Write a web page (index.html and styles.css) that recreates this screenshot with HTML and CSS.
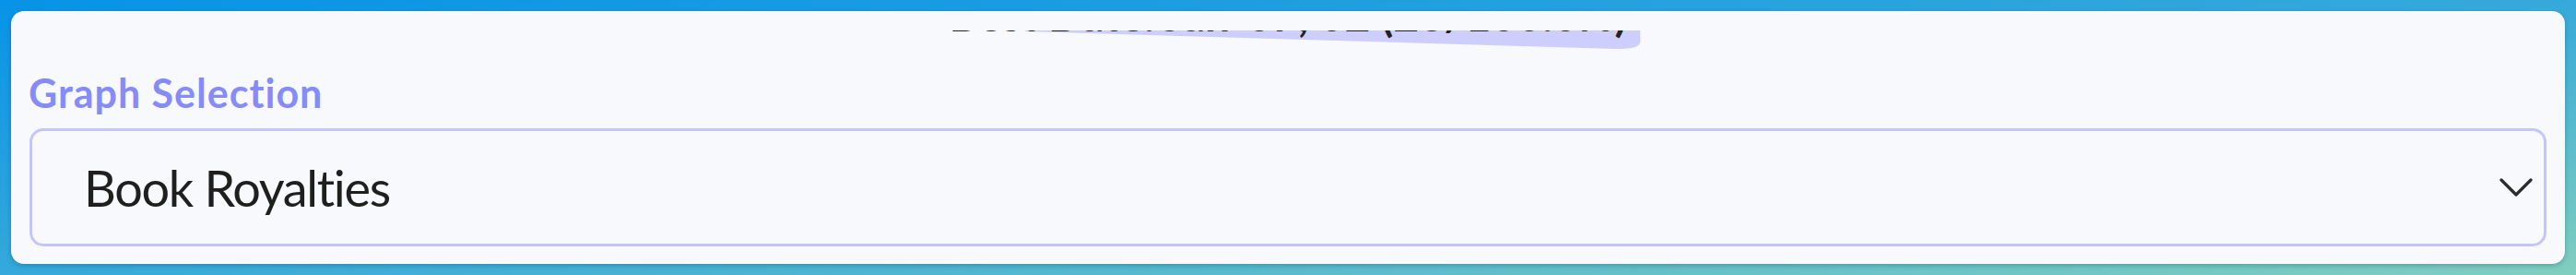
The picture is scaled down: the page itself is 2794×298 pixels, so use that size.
FILE: index.html
```html
<!DOCTYPE html>
<html lang="en">
<head>
<meta charset="utf-8">
<title>Graph Selection</title>
<link rel="stylesheet" href="styles.css">
</head>
<body>
  <main class="card">
    <div class="scroller">
      <div class="caption">
        <span class="caption-text">Best Date: Jan-07, 02 (28/100.0%)<svg class="swoosh" width="667" height="41" viewBox="0 0 667 41" aria-hidden="true"><path d="M0,0 L667,0 L667,31 C667,38 660,40 640,40 L0,21 Z" fill="#cdcefc"/></svg></span>
      </div>
      <div class="label">Graph Selection</div>
      <div class="select">
        <span class="select-value">Book Royalties</span>
        <svg class="chevron" width="36" height="22" viewBox="0 0 36 22" aria-hidden="true"><polyline points="2,3 18,19 34,3" fill="none" stroke="#2b2b2b" stroke-width="3.2" stroke-linecap="round" stroke-linejoin="round"/></svg>
      </div>
    </div>
  </main>
</body>
</html>
```

FILE: styles.css
```css
html, body {
  margin: 0;
  padding: 0;
}

body {
  width: 2794px;
  height: 298px;
  box-sizing: border-box;
  padding: 12px;
  background: linear-gradient(to bottom right, #0793e7 0%, #35a9da 50%, #80cebf 100%);
  font-family: "Lato", "Open Sans", sans-serif;
  font-variant-ligatures: none;
  overflow: hidden;
}

.card {
  box-sizing: border-box;
  height: 274px;
  background: #f8f9fd;
  border-radius: 14px;
  box-shadow: 0 2px 5px rgba(0, 40, 60, 0.25);
  padding: 21px 20px 19px 20px;
}

.scroller {
  height: 100%;
  overflow: hidden;
  display: flex;
  flex-direction: column;
}

.caption {
  margin-top: -45.6px;
  margin-bottom: 30px;
  height: 58px;
  line-height: 58px;
  font-size: 48px;
  font-weight: 700;
  color: #222222;
  text-align: center;
  flex: none;
}

.caption-text {
  position: relative;
  display: inline-block;
  z-index: 0;
}

.swoosh {
  position: absolute;
  left: 82px;
  top: 25.6px;
  z-index: -1;
}

.label {
  font-size: 43px;
  line-height: 52px;
  font-weight: 700;
  letter-spacing: 1px;
  color: #868bf7;
  margin-left: -1px;
  margin-bottom: 12px;
  flex: none;
}

.select {
  box-sizing: border-box;
  height: 128px;
  border: 3px solid #c3c5fb;
  border-radius: 15px;
  display: flex;
  align-items: center;
  justify-content: space-between;
  padding: 0 12px 0 56px;
  flex: none;
}

.select-value {
  font-size: 54px;
  letter-spacing: -1.3px;
  color: #1f1f1f;
}

.chevron {
  display: block;
}
```
